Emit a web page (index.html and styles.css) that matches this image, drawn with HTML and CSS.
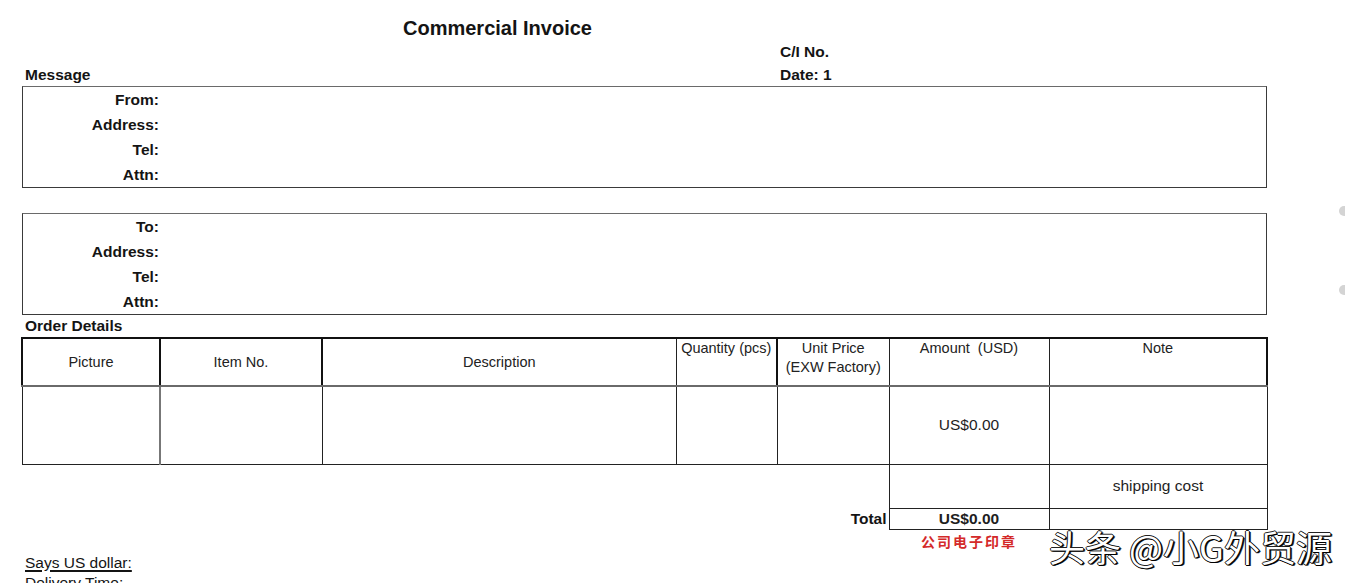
FILE: index.html
```html
<!DOCTYPE html>
<html lang="en">
<head>
<meta charset="utf-8">
<title>Commercial Invoice</title>
<link rel="stylesheet" href="styles.css">
</head>
<body>
<div class="page">
  <h1 class="title">Commercial Invoice</h1>
  <div class="meta">
    <div class="meta-left">Message</div>
    <div class="meta-right">
      <div>C/I No.</div>
      <div>Date: 1</div>
    </div>
  </div>

  <div class="party">
    <div class="lbl">From:</div><div class="val"></div>
    <div class="lbl">Address:</div><div class="val"></div>
    <div class="lbl">Tel:</div><div class="val"></div>
    <div class="lbl">Attn:</div><div class="val"></div>
  </div>

  <div class="party party-to">
    <div class="lbl">To:</div><div class="val"></div>
    <div class="lbl">Address:</div><div class="val"></div>
    <div class="lbl">Tel:</div><div class="val"></div>
    <div class="lbl">Attn:</div><div class="val"></div>
  </div>

  <div class="section-title">Order Details</div>

  <table class="order">
    <colgroup>
      <col class="c-pic"><col class="c-item"><col class="c-desc"><col class="c-qty"><col class="c-price"><col class="c-amt"><col class="c-note">
    </colgroup>
    <tr class="head">
      <th class="mid th-pic">Picture</th>
      <th class="mid th-item">Item No.</th>
      <th class="mid th-desc">Description</th>
      <th class="top th-qty">Quantity (pcs)</th>
      <th class="top th-price">Unit Price<br>(EXW Factory)</th>
      <th class="top th-amt">Amount&nbsp; (USD)</th>
      <th class="top th-note">Note</th>
    </tr>
    <tr class="body">
      <td class="b-pic"></td>
      <td></td>
      <td></td>
      <td></td>
      <td></td>
      <td class="amt">US$0.00</td>
      <td></td>
    </tr>
    <tr class="ship">
      <td class="blank"></td>
      <td class="blank"></td>
      <td class="blank"></td>
      <td class="blank"></td>
      <td class="blank"></td>
      <td class="box"></td>
      <td class="box amt">shipping cost</td>
    </tr>
    <tr class="total">
      <td class="blank"></td>
      <td class="blank"></td>
      <td class="blank"></td>
      <td class="blank"></td>
      <td class="blank total-lbl">Total</td>
      <td class="box amt strong">US$0.00</td>
      <td class="box"></td>
    </tr>
    <tr class="stamp-row">
      <td class="blank"></td>
      <td class="blank"></td>
      <td class="blank"></td>
      <td class="blank"></td>
      <td class="blank"></td>
      <td class="blank stamp">公司电子印章</td>
      <td class="blank"></td>
    </tr>
  </table>

  <div class="notes">
    <div class="says">Says US dollar:</div>
    <div>Delivery Time:</div>
  </div>

  <div class="watermark">头条 @小G外贸源</div>
</div>
<span class="edge-dot dot-a"></span>
<span class="edge-dot dot-b"></span>
</body>
</html>
```

FILE: styles.css
```css
html, body {
  margin: 0;
  padding: 0;
  background: #fff;
  overflow: hidden;
}

body {
  width: 1345px;
  height: 583px;
  position: relative;
  font-family: "Liberation Sans", Arial, sans-serif;
  color: #141414;
}

.page {
  position: relative;
  width: 1245px;
  padding: 16px 0 0 22px;
}

.title {
  margin: 0 0 0 381px;
  font-size: 20px;
  line-height: 24px;
  font-weight: 700;
}

.meta {
  display: flex;
  align-items: flex-end;
  font-weight: 700;
  font-size: 15.5px;
  line-height: 23px;
}

.meta-left {
  width: 755px;
  padding-left: 3px;
}

.party {
  display: grid;
  grid-template-columns: 136px 1fr;
  grid-auto-rows: 25px;
  border: 1px solid #3a3a3a;
  border-top-color: #6a6a6a;
  font-weight: 700;
  font-size: 15.5px;
  line-height: 25px;
}

.party-to {
  margin-top: 25px;
}

.lbl {
  text-align: right;
}

.section-title {
  font-weight: 700;
  font-size: 15.5px;
  line-height: 22px;
  padding-left: 3px;
}

.order {
  width: 1245px;
  margin-left: -1px;
  table-layout: fixed;
  border-collapse: collapse;
  font-size: 15.5px;
}

.c-pic { width: 138px; }
.c-item { width: 162px; }
.c-desc { width: 354px; }
.c-qty { width: 101px; }
.c-price { width: 112px; }
.c-amt { width: 160px; }
.c-note { width: 218px; }

.order th,
.order td {
  padding: 0;
  text-align: center;
}

.order th {
  font-weight: 400;
  font-size: 14.5px;
  line-height: 19px;
  color: #222;
  border-top: 2px solid #111;
  border-bottom: 2px solid #6a6a6a;
  border-left: 1px solid #222;
  border-right: 1px solid #222;
  white-space: nowrap;
}

.order tr.head {
  height: 48px;
}

.order th.mid {
  vertical-align: middle;
}

.order th.top {
  vertical-align: top;
}

.th-pic { border-left: 2px solid #111 !important; border-right: 2px solid #111 !important; }
.th-item { border-right: 2px solid #111 !important; }
.th-qty { border-right: 2px solid #111 !important; }
.th-note { border-right: 2px solid #111 !important; }

.order tr.body {
  height: 78px;
}

.order tr.body td {
  border: 1px solid #222;
  vertical-align: middle;
}

.order tr.body td.b-pic {
  border-right: 2px solid #777;
}

.order tr.ship {
  height: 44px;
}

.order tr.total {
  height: 21px;
  line-height: 19px;
}

.order td.blank {
  border: none;
}

.order td.box {
  border: 1px solid #222;
  vertical-align: middle;
}

.amt {
  color: #1e1e1e;
}

.strong,
.total-lbl {
  font-weight: 700;
}

.order td.total-lbl {
  text-align: right;
  padding-right: 2px;
}

.order tr.stamp-row {
  height: 23px;
}

.order td.stamp {
  color: #d42a2a;
  font-family: "Noto Sans CJK SC", sans-serif;
  font-weight: 700;
  font-size: 14px;
  letter-spacing: 2px;
  line-height: 23px;
  vertical-align: middle;
}

.notes {
  padding-left: 3px;
  font-size: 15.5px;
  line-height: 20px;
}

.says {
  text-decoration: underline;
  text-decoration-thickness: 1.5px;
  text-underline-offset: 2px;
}

.watermark {
  position: absolute;
  left: 1049px;
  top: 523px;
  font-family: "Noto Sans CJK SC", sans-serif;
  font-size: 36px;
  line-height: 46px;
  font-weight: 400;
  color: #fff;
  white-space: nowrap;
  text-shadow: 1px 1px 0 #000, -1px 0 0 #111, 1px 0 0 #000, 0 1px 0 #000, 0 -1px 0 #222, 2px 1px 0 #333;
}

.edge-dot {
  position: absolute;
  left: 1339px;
  width: 10px;
  height: 10px;
  border-radius: 50%;
  background: #d4d4d4;
}

.dot-a { top: 206px; }
.dot-b { top: 285px; }
```
